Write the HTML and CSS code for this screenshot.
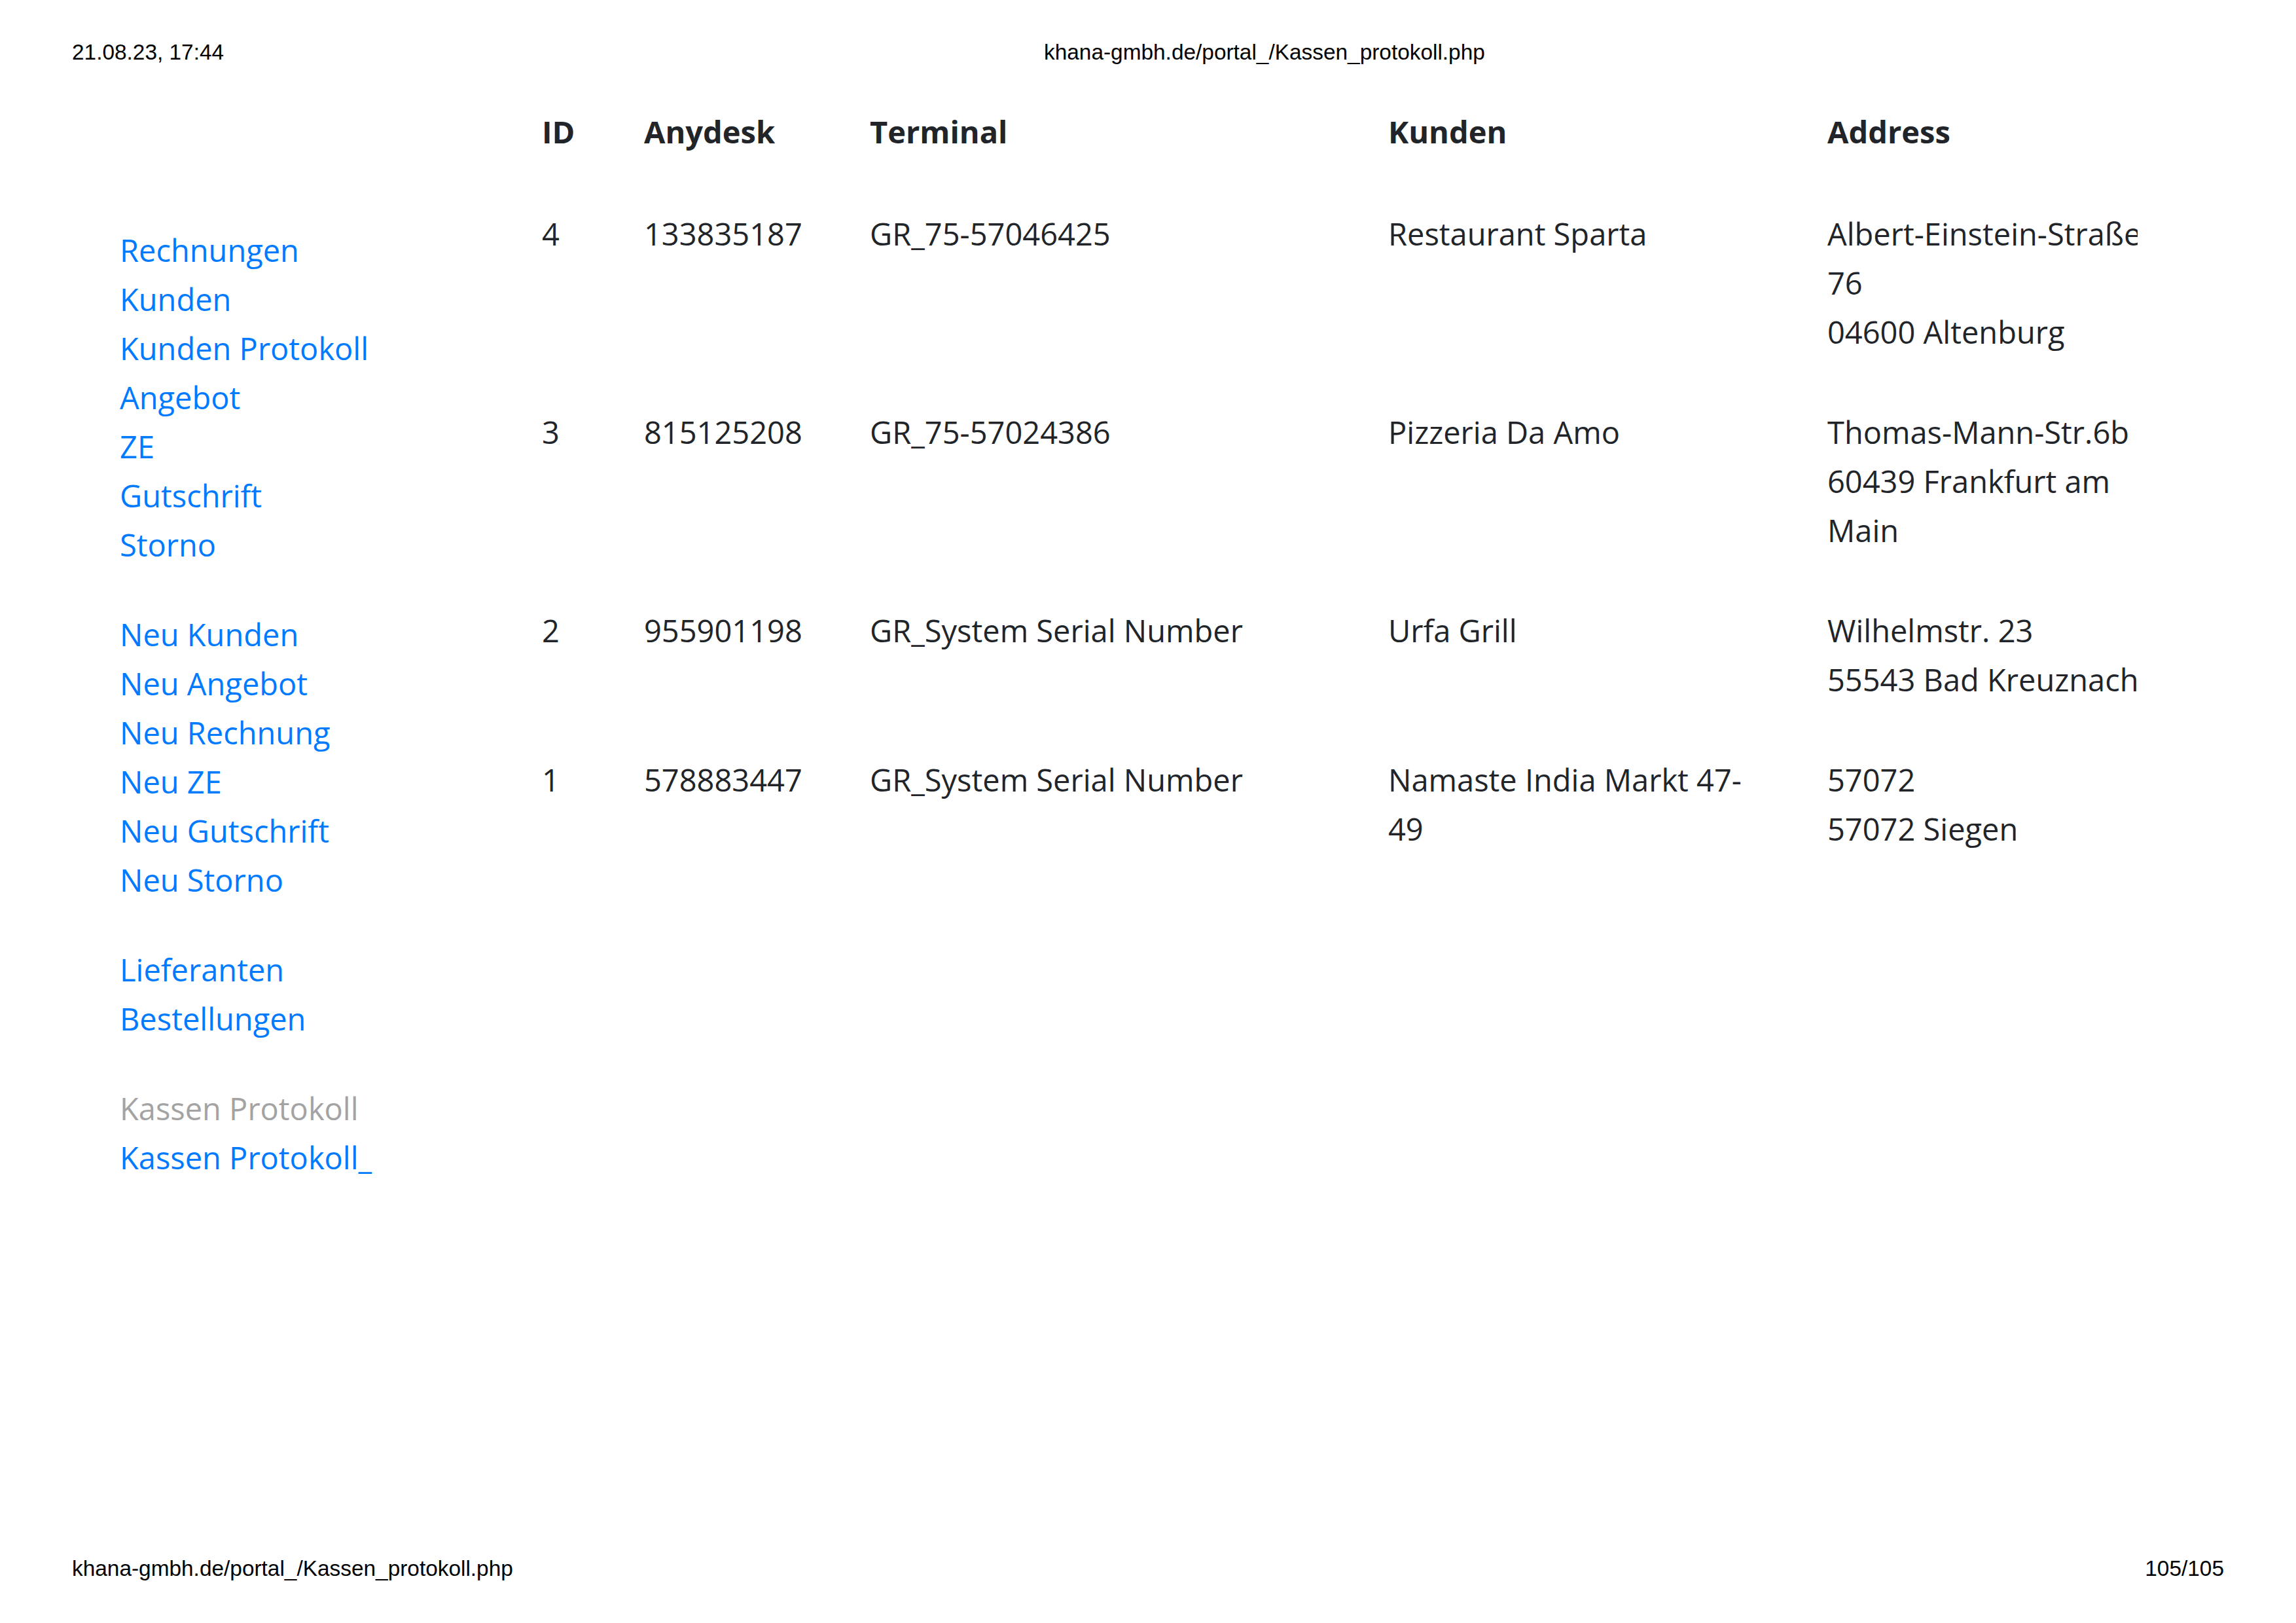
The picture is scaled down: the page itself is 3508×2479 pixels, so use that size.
FILE: index.html
```html
<!DOCTYPE html>
<html lang="de">
<head>
<meta charset="utf-8">
<title>khana-gmbh.de/portal_/Kassen_protokoll.php</title>
<link rel="stylesheet" href="styles.css">
</head>
<body>
<header class="print-header">
  <span class="print-date">21.08.23, 17:44</span>
  <span class="print-title">khana-gmbh.de/portal_/Kassen_protokoll.php</span>
</header>

<main class="page">
  <nav class="sidebar">
    <ul class="nav-group">
      <li><a href="#">Rechnungen</a></li>
      <li><a href="#">Kunden</a></li>
      <li><a href="#">Kunden Protokoll</a></li>
      <li><a href="#">Angebot</a></li>
      <li><a href="#">ZE</a></li>
      <li><a href="#">Gutschrift</a></li>
      <li><a href="#">Storno</a></li>
    </ul>
    <ul class="nav-group">
      <li><a href="#">Neu Kunden</a></li>
      <li><a href="#">Neu Angebot</a></li>
      <li><a href="#">Neu Rechnung</a></li>
      <li><a href="#">Neu ZE</a></li>
      <li><a href="#">Neu Gutschrift</a></li>
      <li><a href="#">Neu Storno</a></li>
    </ul>
    <ul class="nav-group">
      <li><a href="#">Lieferanten</a></li>
      <li><a href="#">Bestellungen</a></li>
    </ul>
    <ul class="nav-group">
      <li><span class="nav-disabled">Kassen Protokoll</span></li>
      <li><a href="#">Kassen Protokoll_</a></li>
    </ul>
  </nav>

  <table class="data-table">
    <colgroup>
      <col class="c-id"><col class="c-any"><col class="c-term"><col class="c-kunde"><col class="c-addr">
    </colgroup>
    <thead>
      <tr><th>ID</th><th>Anydesk</th><th>Terminal</th><th>Kunden</th><th>Address</th></tr>
    </thead>
    <tbody>
      <tr>
        <td>4</td><td>133835187</td><td>GR_75-57046425</td><td>Restaurant Sparta</td>
        <td class="addr"><span class="ln ln-clip">Albert-Einstein-Straße</span><span class="ln">76</span><span class="ln">04600 Altenburg</span></td>
      </tr>
      <tr>
        <td>3</td><td>815125208</td><td>GR_75-57024386</td><td>Pizzeria Da Amo</td>
        <td class="addr"><span class="ln">Thomas-Mann-Str.6b</span><span class="ln">60439 Frankfurt am</span><span class="ln">Main</span></td>
      </tr>
      <tr>
        <td>2</td><td>955901198</td><td>GR_System Serial Number</td><td>Urfa Grill</td>
        <td class="addr"><span class="ln">Wilhelmstr. 23</span><span class="ln">55543 Bad Kreuznach</span></td>
      </tr>
      <tr>
        <td>1</td><td>578883447</td><td>GR_System Serial Number</td>
        <td><span class="ln">Namaste India Markt 47-</span><span class="ln">49</span></td>
        <td class="addr"><span class="ln">57072</span><span class="ln">57072 Siegen</span></td>
      </tr>
    </tbody>
  </table>
</main>

<footer class="print-footer">
  <span>khana-gmbh.de/portal_/Kassen_protokoll.php</span>
  <span>105/105</span>
</footer>
</body>
</html>
```
FILE: styles.css
```css
html, body {
  margin: 0;
  padding: 0;
  background: #ffffff;
}

body {
  width: 3508px;
  height: 2479px;
  display: flex;
  flex-direction: column;
  overflow: hidden;
  font-family: "Open Sans", "Noto Sans", sans-serif;
  color: #212529;
}

.print-header {
  display: grid;
  grid-template-columns: 1485px auto;
  padding: 62px 110px 0 110px;
  font-family: "Liberation Sans", Arial, sans-serif;
  font-size: 33.4px;
  line-height: 36px;
  color: #000;
}

.page {
  flex: 1;
  display: flex;
  align-items: flex-start;
  margin-top: 25px;
  font-size: 47px;
  line-height: 75px;
}

.sidebar {
  width: 620px;
  flex: none;
  padding: 222px 0 0 183px;
}

.nav-group {
  list-style: none;
  margin: 0 0 62px 0;
  padding: 0;
}

.nav-group a {
  color: #007bff;
  text-decoration: none;
}

.nav-disabled {
  color: #a3a3a3;
}

.data-table {
  table-layout: fixed;
  width: 2488px;
  border-collapse: separate;
  border-spacing: 0;
  flex: none;
}

.c-id { width: 156px; }
.c-any { width: 345px; }
.c-term { width: 792px; }
.c-kunde { width: 671px; }
.c-addr { width: 524px; }

.data-table th,
.data-table td {
  padding: 37.5px 25px;
  text-align: left;
  vertical-align: top;
  border-top: 3px solid transparent;
  white-space: nowrap;
}

.data-table th {
  font-weight: 700;
  border-bottom: 3px solid transparent;
}

.data-table td {
  font-weight: 400;
}

.ln {
  display: block;
  white-space: nowrap;
}

.ln-clip {
  overflow: hidden;
}

.print-footer {
  display: flex;
  justify-content: space-between;
  padding: 0 110px 65px 110px;
  font-family: "Liberation Sans", Arial, sans-serif;
  font-size: 33.4px;
  line-height: 36px;
  color: #000;
}
```
